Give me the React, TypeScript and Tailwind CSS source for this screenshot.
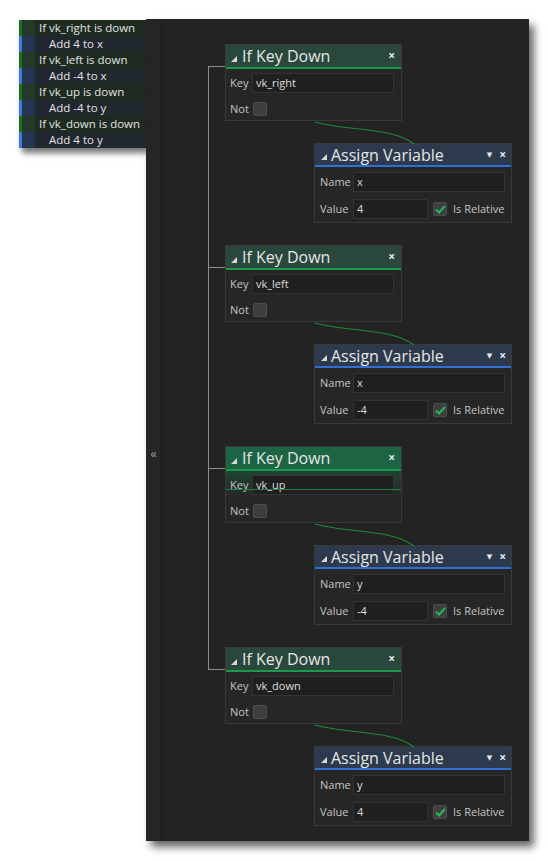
import React from 'react'

const font = { fontFamily: '"Open Sans", "DejaVu Sans", sans-serif' }

const listRows = [
  { kind: 'if', text: 'If vk_right is down' },
  { kind: 'act', text: 'Add 4 to x' },
  { kind: 'if', text: 'If vk_left is down' },
  { kind: 'act', text: 'Add -4 to x' },
  { kind: 'if', text: 'If vk_up is down' },
  { kind: 'act', text: 'Add -4 to y' },
  { kind: 'if', text: 'If vk_down is down' },
  { kind: 'act', text: 'Add 4 to y' },
]

const pairs = [
  { key: 'vk_right', name: 'x', value: '4' },
  { key: 'vk_left', name: 'x', value: '-4' },
  { key: 'vk_up', name: 'y', value: '-4', active: true },
  { key: 'vk_down', name: 'y', value: '4' },
]

function Check({ checked }: { checked?: boolean }) {
  return (
    <div className="w-[14px] h-[14px] rounded-[2px] bg-[#3e3e3e] border border-[#4e4e4e] flex items-center justify-center">
      {checked && (
        <svg width="11" height="9" viewBox="0 0 11 9">
          <path d="M1 4.5 L4 7.5 L10 1" fill="none" stroke="#27b25e" strokeWidth="2.2" />
        </svg>
      )}
    </div>
  )
}

function Corner() {
  return (
    <svg width="6" height="6" viewBox="0 0 6 6" className="mt-[5px]">
      <path d="M6 0 L6 6 L0 6 Z" fill="#d8d8d8" />
    </svg>
  )
}

function IfKeyDown({ keyName, active }: { keyName: string; active?: boolean }) {
  return (
    <div className="ml-[63px] w-[177px] h-[77px] border border-[#3a3a3a] bg-[#262626] flex flex-col">
      <div className={`h-[22px] flex items-center pl-[5px] pr-[6px] ${active ? 'bg-[#1c6444]' : 'bg-[#29473a]'}`}>
        <Corner />
        <span className="ml-[5px] text-[16px] text-[#e6e6e6] leading-none">If Key Down</span>
        <span className="ml-auto text-[12px] font-bold text-[#e8e8e8] leading-none">×</span>
      </div>
      <div className="h-[2px] bg-[#1c9a4c]" />
      <div className={`relative flex-1 flex flex-col pt-[4px] gap-[6px] pl-[4px] ${active ? 'bg-gradient-to-b from-[#1d4532] via-[#262626] to-[#262626]' : ''}`}>
        <div className="h-[20px] flex items-center">
          <span className="w-[22px] text-[11px] text-[#c4c4c4]">Key</span>
          <div className="w-[142px] h-[20px] bg-[#1f1f1f] border border-[#333] flex items-center pl-[3px] text-[11px] text-[#dedede]">
            {keyName}
          </div>
        </div>
        {active && <div className="absolute left-0 right-0 top-[18px] h-px bg-[#1f7f4c]" />}
        <div className="h-[20px] flex items-center">
          <span className="w-[23px] text-[11px] text-[#c4c4c4]">Not</span>
          <Check />
        </div>
      </div>
    </div>
  )
}

function AssignVariable({ name, value }: { name: string; value: string }) {
  return (
    <div className="ml-[152px] w-[198px] h-[80px] border border-[#3a3a3a] bg-[#262626] flex flex-col">
      <div className="h-[21px] flex items-center pl-[6px] pr-[5px] bg-[#2d3a4d]">
        <Corner />
        <span className="ml-[4px] text-[16px] text-[#e6e6e6] leading-none">Assign Variable</span>
        <span className="ml-auto text-[7px] text-[#e8e8e8] leading-none">▼</span>
        <span className="ml-[7px] text-[12px] font-bold text-[#e8e8e8] leading-none">×</span>
      </div>
      <div className="h-[2px] bg-[#2f6fd6]" />
      <div className="flex-1 flex flex-col pt-[5px] gap-[7px] pl-[5px]">
        <div className="h-[20px] flex items-center">
          <span className="w-[33px] text-[11px] text-[#c4c4c4]">Name</span>
          <div className="w-[152px] h-[20px] bg-[#1f1f1f] border border-[#333] flex items-center pl-[3px] text-[11px] text-[#dedede]">
            {name}
          </div>
        </div>
        <div className="h-[20px] flex items-center">
          <span className="w-[33px] text-[11px] text-[#c4c4c4]">Value</span>
          <div className="w-[75px] h-[20px] bg-[#1f1f1f] border border-[#333] flex items-center pl-[3px] text-[11px] text-[#dedede]">
            {value}
          </div>
          <div className="ml-[5px]">
            <Check checked />
          </div>
          <span className="ml-[6px] text-[11px] text-[#c4c4c4]">Is Relative</span>
        </div>
      </div>
    </div>
  )
}

export default function App() {
  const period = 201
  return (
    <div className="w-[548px] h-[861px] bg-white flex items-start pt-[19px] pl-[19px]" style={font}>
      {/* event list */}
      <div className="w-[127px] mt-px flex flex-col shadow-[3px_5px_6px_rgba(0,0,0,0.55)]">
        {listRows.map((r, i) => (
          <div key={i} className="h-[16px] flex">
            <div className={`w-[3px] ${r.kind === 'if' ? 'bg-[#1e6e22]' : 'bg-[#3b7be0]'}`} />
            <div className={`w-[13px] ${r.kind === 'if' ? 'bg-[#223a27]' : 'bg-[#24354f]'}`} />
            <div
              className={`flex-1 flex items-center text-[11.5px] text-[#e2e2e2] leading-none whitespace-nowrap ${
                r.kind === 'if' ? 'bg-[#1e2b21] pl-[4px]' : 'bg-[#22282f] pl-[14px]'
              }`}
            >
              {r.text}
            </div>
          </div>
        ))}
      </div>

      {/* main workspace */}
      <div className="w-[383px] h-[822px] bg-[#232323] flex shadow-[5px_6px_8px_rgba(0,0,0,0.6)]">
        <div className="w-[16px] border-r border-[#1a1a1a] bg-[#252525] flex justify-center pt-[428px]">
          <span className="text-[13px] text-[#9a9a9a] leading-none">«</span>
        </div>
        <div className="relative flex-1 flex flex-col gap-[22px] pt-[25px]">
          <svg className="absolute inset-0 pointer-events-none" width="366" height="822">
            <line x1="46.5" y1={47} x2="46.5" y2={47 + period * 3 + 0.5} stroke="#8c8c8c" strokeWidth="1" />
            {pairs.map((_, i) => (
              <g key={i}>
                <line x1="46" y1={47.5 + period * i} x2="63" y2={47.5 + period * i} stroke="#8c8c8c" strokeWidth="1" />
                <path
                  d={`M153 ${103 + period * i} C 185 ${112 + period * i}, 230 ${108 + period * i}, 252 ${125 + period * i}`}
                  fill="none"
                  stroke="#1f8b34"
                  strokeWidth="1.2"
                />
              </g>
            ))}
          </svg>
          {pairs.map((p, i) => (
            <React.Fragment key={i}>
              <IfKeyDown keyName={p.key} active={p.active} />
              <AssignVariable name={p.name} value={p.value} />
            </React.Fragment>
          ))}
        </div>
      </div>
    </div>
  )
}
